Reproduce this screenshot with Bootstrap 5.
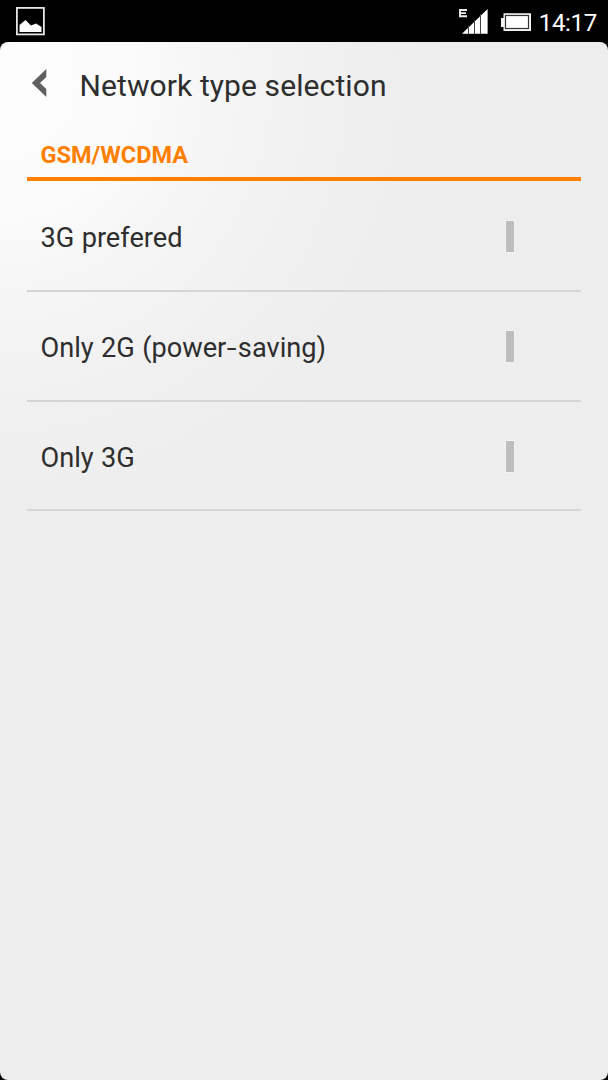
<!DOCTYPE html>
<html lang="en">
<head>
<meta charset="utf-8">
<meta name="viewport" content="width=device-width, initial-scale=1">
<title>Network type selection</title>
<link href="https://cdn.jsdelivr.net/npm/bootstrap@5.3.0/dist/css/bootstrap.min.css" rel="stylesheet">
<style>
  body { background: #000; color: #2e2e2e; font-family: Roboto, "Liberation Sans", sans-serif; }
  .status-bar { height: 42px; padding-left: 15px; padding-right: 11px; }
  .signal { margin-right: 12px; }
  .battery { margin-top: 2px; }
  .clock { font-size: 24px; line-height: 40px; padding-top: 3px; margin-left: 7px; letter-spacing: -.3px; }
  .screen { border-radius: 8px; background: #ededed radial-gradient(circle at 0 42px, #fdfdfd 0, #fbfbfb 130px, #f6f6f6 200px, #f2f2f2 290px, #efefef 370px, #ededed 450px); }
  .title-bar { height: 87px; padding-left: 31px; }
  .title-bar svg { margin-bottom: 5px; }
  .title-bar h1 { font-size: 30px; line-height: 34px; letter-spacing: .1px; margin-left: 32.5px; }
  .section-head { height: 52px; padding: 9px 13.5px 0; border-bottom: 4px solid #ff7f00; color: #ff7f00; font-size: 23.5px; line-height: 34px; }
  .options { margin: 0 27px; }
  .option { height: 110px; padding: 2px 67px 0 13.5px; border-bottom: 2px solid #d5d5d5; font-size: 27.2px; line-height: 40px; word-spacing: .6px; }
  .option:first-of-type { height: 111px; }
  .option:last-of-type { height: 109px; padding-top: 3px; }
  .option > span { padding-top: 2px; }
  .mark-bar { width: 8px; height: 31px; margin-bottom: 1px; background: #bdbdbd; outline: 1px solid #f3f3f3; }
  .wide-hyphen { display: inline-block; transform: scaleX(1.3); margin: 0 2px; }
</style>
</head>
<body class="vh-100 d-flex flex-column overflow-hidden">
  <header class="status-bar d-flex align-items-center">
    <svg width="30" height="30" viewBox="0 0 30 30" aria-hidden="true">
      <rect x="1.9" y="1.9" width="27" height="26.5" fill="none" stroke="#e4e4e4" stroke-width="1.8"/>
      <path d="M4.5 26V19L10.5 14L16 19.5L21 17.5L26.5 21V26Z" fill="#fff"/>
    </svg>
    <svg class="signal ms-auto" width="30" height="28" viewBox="0 0 30 28" aria-hidden="true">
      <path d="M9 3H2V9.2H9M2 6.1H8" fill="none" stroke="#eee" stroke-width="1.9"/>
      <path d="M4 26.7L29.6 2V26.7Z" fill="#fff"/>
      <path d="M10.5 19V27M16.5 13V27M22.5 7V27" stroke="#444" stroke-width="1"/>
    </svg>
    <svg class="battery" width="32" height="20" viewBox="0 0 32 20" aria-hidden="true">
      <path d="M3.5 1.2H31V19H3.500V15H1V6H3.500Z" fill="#f5f5f5"/>
      <rect x="5.500" y="3.500" width="23" height="13" fill="#fff" stroke="#333" stroke-width="1.200"/>
    </svg>
    <span class="clock text-white">14:17</span>
  </header>
  <main class="screen flex-grow-1">
    <div class="title-bar d-flex align-items-center">
      <svg width="16" height="30" viewBox="0 0 16 30" aria-hidden="true">
        <path d="M15.3 1V9L9 15L15.3 21V29L.8 15Z" fill="#606060"/>
      </svg>
      <h1 class="mb-0 fw-normal">Network type selection</h1>
    </div>
    <section class="options">
      <h2 class="section-head fw-bold mb-0">GSM/WCDMA</h2>
      <div class="option d-flex align-items-center justify-content-between"><span>3G prefered</span><i class="mark-bar"></i></div>
      <div class="option d-flex align-items-center justify-content-between"><span>Only 2G (power<span class="wide-hyphen">-</span>saving)</span><i class="mark-bar"></i></div>
      <div class="option d-flex align-items-center justify-content-between"><span>Only 3G</span><i class="mark-bar"></i></div>
    </section>
  </main>
<script src="https://cdn.jsdelivr.net/npm/bootstrap@5.3.0/dist/js/bootstrap.bundle.min.js"></script>
</body>
</html>
